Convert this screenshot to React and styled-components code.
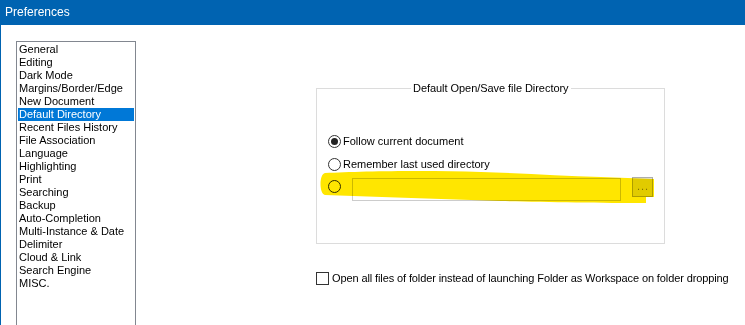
import React, { useState } from 'react';
import styled, { createGlobalStyle } from 'styled-components';

const GlobalStyle = createGlobalStyle`
	html, body {
		margin: 0;
		padding: 0;
		background: #ffffff;
	}
	body {
		font-family: "Liberation Sans", Arial, sans-serif;
		font-size: 11px;
		color: #000;
	}
`;

const categories = [
	'General',
	'Editing',
	'Dark Mode',
	'Margins/Border/Edge',
	'New Document',
	'Default Directory',
	'Recent Files History',
	'File Association',
	'Language',
	'Highlighting',
	'Print',
	'Searching',
	'Backup',
	'Auto-Completion',
	'Multi-Instance & Date',
	'Delimiter',
	'Cloud & Link',
	'Search Engine',
	'MISC.',
];

function App() {
	const [selected, setSelected] = useState('Default Directory');
	const [mode, setMode] = useState('follow');

	return (
		<Window>
			<GlobalStyle />
			<TitleBar>Preferences</TitleBar>
			<Body>
				<ListBox>
					{categories.map(name => (
						<ListItem
							key={`CAT_${name}`}
							active={name === selected}
							onClick={() => setSelected(name)}
						>
							{name}
						</ListItem>
					))}
				</ListBox>
				<Panel>
					<GroupBox>
						<Legend>Default Open/Save file Directory</Legend>
						<Options>
							<OptionRow onClick={() => setMode('follow')}>
								<Radio checked={mode === 'follow'} />
								<Label>Follow current document</Label>
							</OptionRow>
							<OptionRow onClick={() => setMode('remember')}>
								<Radio checked={mode === 'remember'} />
								<Label>Remember last used directory</Label>
							</OptionRow>
							<CustomRow>
								<Radio checked={mode === 'custom'} offset={4} onClick={() => setMode('custom')} />
								<PathInput disabled />
								<BrowseButton disabled>...</BrowseButton>
							</CustomRow>
						</Options>
					</GroupBox>
					<CheckRow>
						<CheckBox />
						<Label tight>Open all files of folder instead of launching Folder as Workspace on folder dropping</Label>
					</CheckRow>
				</Panel>
			</Body>
			{/* marker scribble over the custom path row */}
			<Highlighter viewBox="0 0 745 325" width="745" height="325">
				<path d="M324,173 C360,171 430,170 480,172 C520,173 560,176 600,177 L653,179 L653,197 L645,197 L645,203 C600,203 540,202 500,201 C440,199 380,197 324,195 C318,194 318,174 324,173 Z" />
			</Highlighter>
		</Window>
	);
}

export default App;

const Window = styled.div`
	position: relative;
	width: 745px;
	height: 325px;
	overflow: hidden;
	border-left: 1px solid #0063b1;
	box-sizing: border-box;
	background: #fff;
`;

const TitleBar = styled.div`
	height: 25px;
	margin-left: -1px;
	background: #0063b1;
	color: #fff;
	font-size: 12px;
	line-height: 25px;
	padding-left: 5px;
`;

const Body = styled.div`
	display: flex;
	padding: 16px 0 0 15px;
`;

const ListBox = styled.ul`
	list-style: none;
	margin: 0;
	padding: 1px;
	width: 120px;
	height: 300px;
	box-sizing: border-box;
	border: 1px solid #828790;
	flex-shrink: 0;
`;

const ListItem = styled.li`
	height: 13px;
	line-height: 13px;
	padding-left: 1px;
	white-space: nowrap;
	cursor: default;
	background: ${props => (props.active ? '#0078d7' : 'transparent')};
	color: ${props => (props.active ? '#fff' : '#000')};
`;

const Panel = styled.div`
	margin-left: 180px;
	padding-top: 41px;
	display: flex;
	flex-direction: column;
`;

const GroupBox = styled.fieldset`
	margin: 0;
	width: 348px;
	height: 162px;
	box-sizing: border-box;
	padding: 0 11px;
	border: 1px solid #dcdcdc;
`;

const Legend = styled.legend`
	margin-left: 83px;
	padding: 0 2px;
	line-height: 13px;
	letter-spacing: -0.05px;
`;

const Options = styled.div`
	display: flex;
	flex-direction: column;
	padding-top: 35px;
`;

const OptionRow = styled.div`
	display: flex;
	align-items: center;
	height: 23px;
	cursor: default;
`;

const CustomRow = styled.div`
	display: flex;
	align-items: flex-start;
	height: 25px;
`;

const Radio = styled.span`
	position: relative;
	width: 13px;
	height: 13px;
	box-sizing: border-box;
	border: 1px solid #333;
	border-radius: 50%;
	background: #fff;
	flex-shrink: 0;
	margin-top: ${props => props.offset || 0}px;

	&::after {
		content: '';
		position: absolute;
		left: 2px;
		top: 2px;
		width: 7px;
		height: 7px;
		border-radius: 50%;
		background: #222;
		display: ${props => (props.checked ? 'block' : 'none')};
	}
`;

const Label = styled.span`
	margin-left: 2px;
	white-space: nowrap;
	line-height: 13px;
	letter-spacing: ${props => (props.tight ? '-0.11px' : 'normal')};
`;

const PathInput = styled.input`
	margin: 2px 0 0 11px;
	width: 269px;
	height: 23px;
	box-sizing: border-box;
	border: 1px solid #cccccc;
	background: #fff;
	padding: 0 3px;
	font: inherit;
`;

const BrowseButton = styled.button`
	display: flex;
	align-items: flex-end;
	justify-content: center;
	margin: 1px 0 0 11px;
	width: 21px;
	height: 20px;
	box-sizing: border-box;
	border: 1px solid #adadad;
	background: #e1e1e1;
	color: #838383;
	font: inherit;
	font-size: 11px;
	letter-spacing: 1px;
	padding: 0 0 4px 1px;
	line-height: 1;
`;

const CheckRow = styled.div`
	display: flex;
	align-items: center;
	margin-top: 28px;
	height: 13px;
`;

const CheckBox = styled.span`
	width: 13px;
	height: 13px;
	box-sizing: border-box;
	border: 1px solid #333;
	background: #fff;
	flex-shrink: 0;
	margin-right: 1px;
`;

const Highlighter = styled.svg`
	position: absolute;
	left: 0;
	top: 0;
	pointer-events: none;
	mix-blend-mode: multiply;

	path {
		fill: #ffe600;
	}
`;
